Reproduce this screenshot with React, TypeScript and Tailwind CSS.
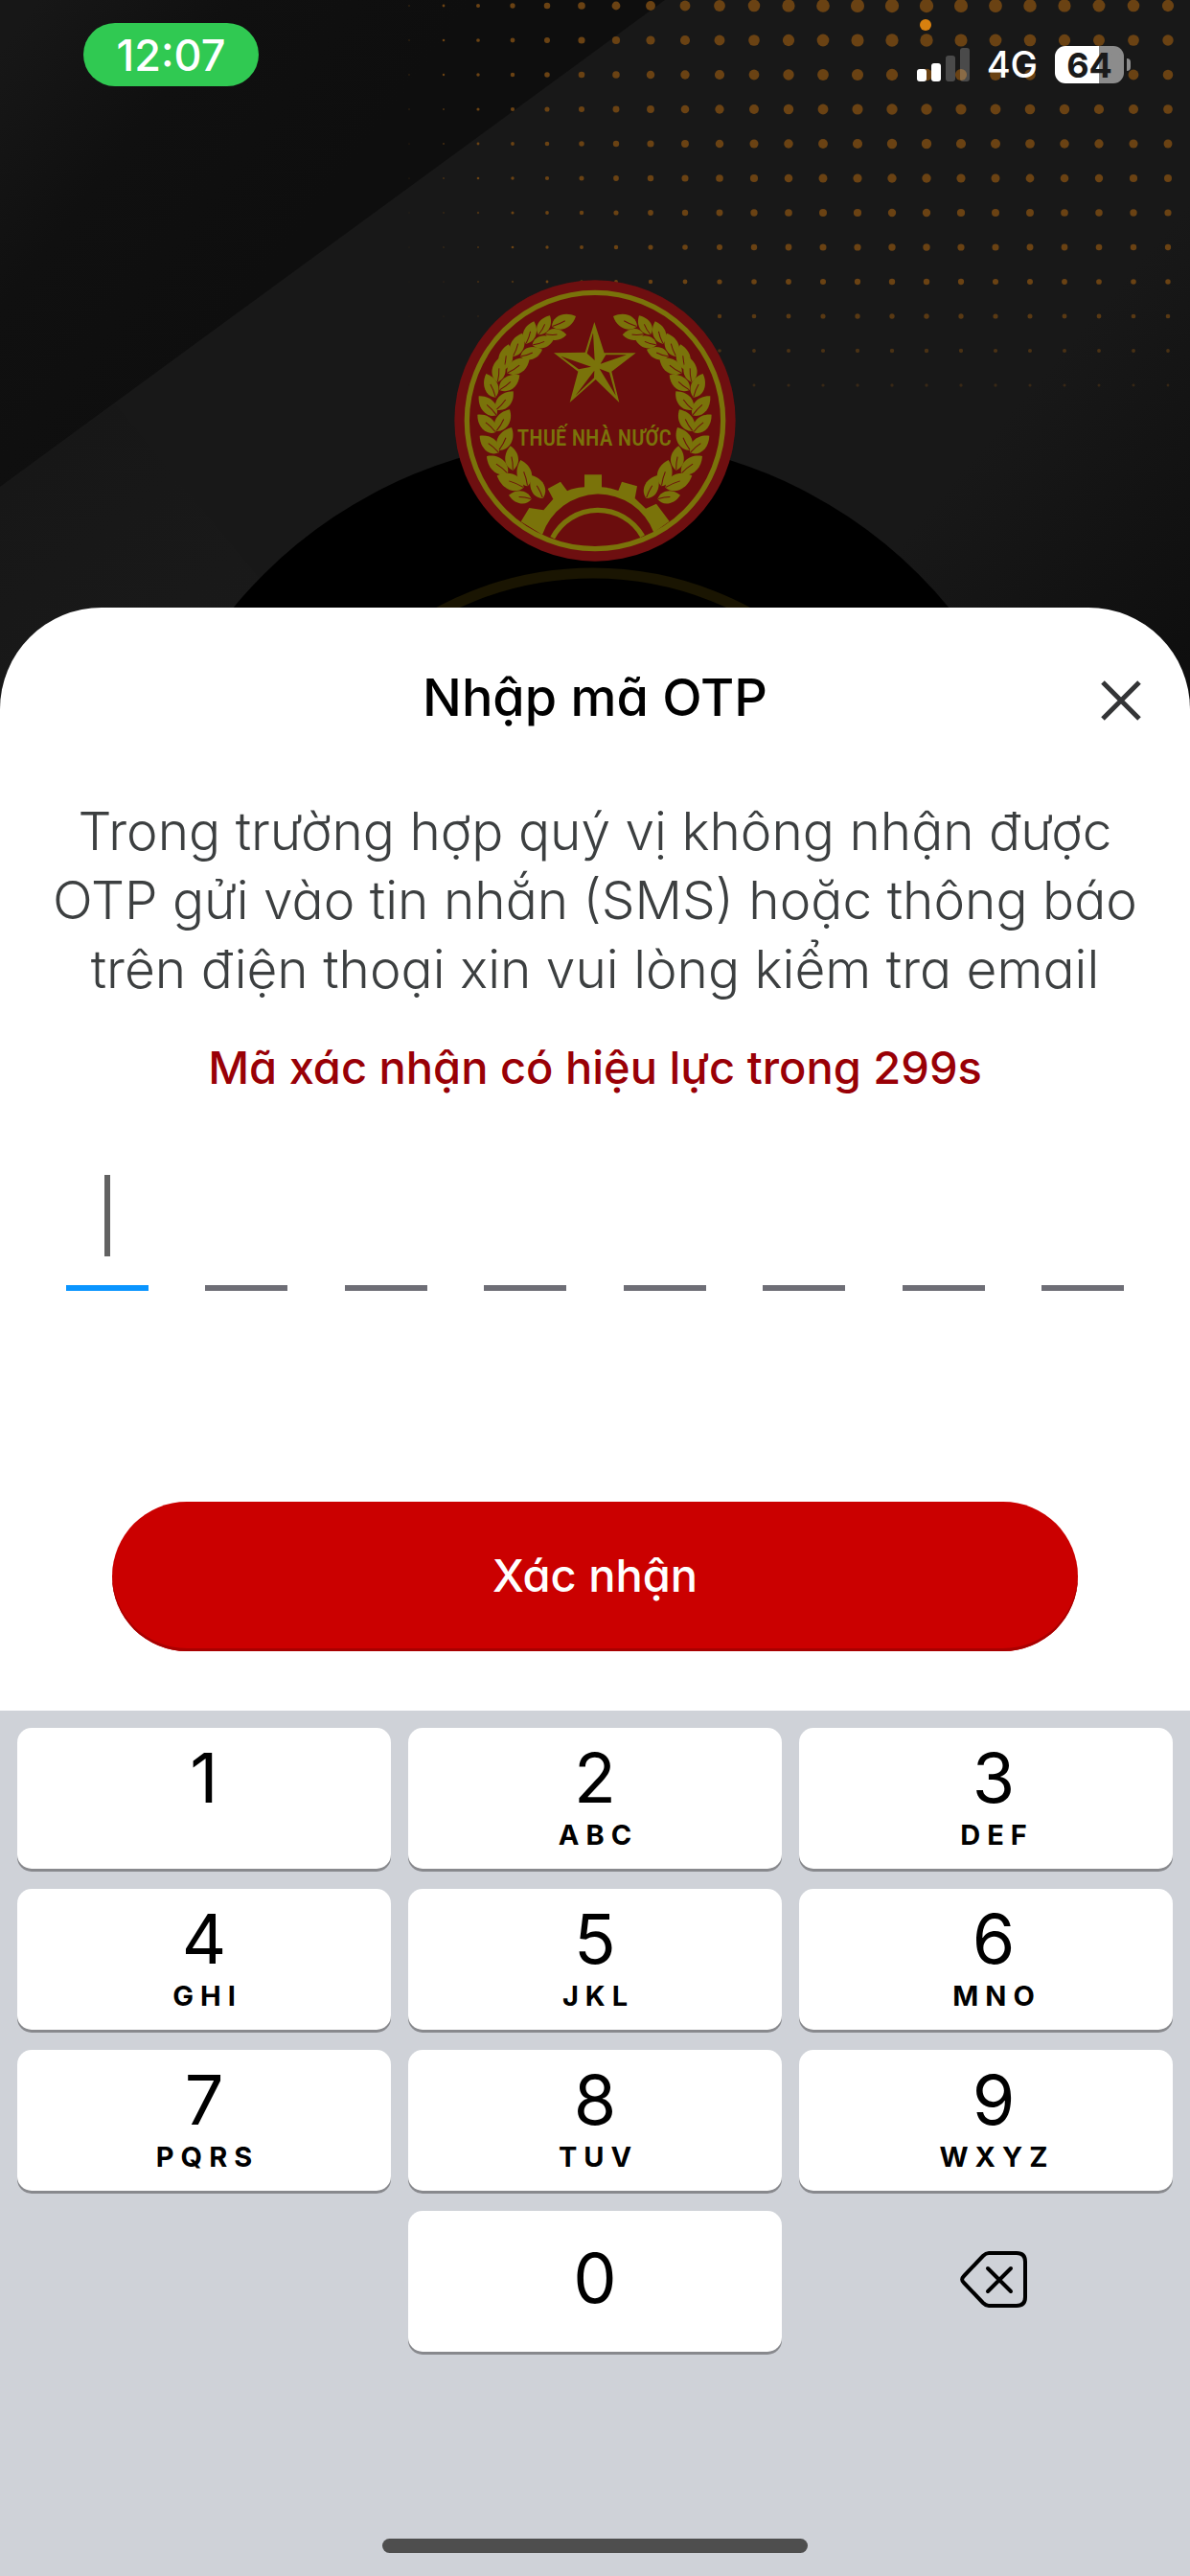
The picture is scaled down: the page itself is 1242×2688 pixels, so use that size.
const KEYS = [
  { digit: '1', letters: '' },
  { digit: '2', letters: 'ABC' },
  { digit: '3', letters: 'DEF' },
  { digit: '4', letters: 'GHI' },
  { digit: '5', letters: 'JKL' },
  { digit: '6', letters: 'MNO' },
  { digit: '7', letters: 'PQRS' },
  { digit: '8', letters: 'TUV' },
  { digit: '9', letters: 'WXYZ' },
];

// Dots of the halftone: they shrink down the page and away from column x = 968.
const DOTS = Array.from({ length: 12 }, (_, row) =>
  Array.from({ length: 23 }, (_, col) => {
    const x = 427 + col * 36;
    const y = 6 + row * 36;
    const away = x - 968;
    const side = away < 0 ? Math.pow(Math.cos(away / 385), 1.2) : 1 - (away / 272) * 0.16;
    const base = 7.2 - row * 0.5;
    const r = base * Math.max(0, side);
    const opacity = row < 9 ? 1 : 1 - (row - 8) * 0.2;
    return { x, y, r, opacity: r < 1.2 ? opacity * 0.6 : opacity };
  }),
).flat();

function Backdrop() {
  return (
    <svg
      aria-hidden="true"
      viewBox="0 0 1242 760"
      preserveAspectRatio="xMidYMin slice"
      className="absolute inset-x-0 top-0 h-auto w-full"
    >
      <defs>
        <linearGradient id="corner" gradientUnits="userSpaceOnUse" x1="40" y1="0" x2="330" y2="220">
          <stop offset="0" stopColor="#171717" />
          <stop offset="0.45" stopColor="#101010" />
          <stop offset="1" stopColor="#0e0e0e" />
        </linearGradient>
        <linearGradient id="ground" gradientUnits="userSpaceOnUse" x1="700" y1="300" x2="1242" y2="760">
          <stop offset="0" stopColor="#181818" />
          <stop offset="0.5" stopColor="#181818" />
          <stop offset="1" stopColor="#0d0d0d" />
        </linearGradient>
        <linearGradient id="lower" gradientUnits="userSpaceOnUse" x1="0" y1="480" x2="160" y2="680">
          <stop offset="0" stopColor="#151515" />
          <stop offset="1" stopColor="#1b1b1b" />
        </linearGradient>
      </defs>
      <rect width="1242" height="760" fill="url(#ground)" />
      <path d="M0 508 L120 421 L400 760 H0Z" fill="url(#lower)" opacity="0.4" />
      <path d="M0 0H694L0 508Z" fill="url(#corner)" />
      {DOTS.map((d) => (
        <circle key={`${d.x}-${d.y}`} cx={d.x} cy={d.y} r={d.r} fill="#6a4213" opacity={d.opacity} />
      ))}
      <circle cx="617" cy="942" r="484" fill="#000" />
      <circle cx="619" cy="937" r="339" fill="none" stroke="#1a1502" strokeWidth="11" />
    </svg>
  );
}

const LEAVES: [number, number, number, number][] = [
  [378, 212, 453, 180],
  [336, 238, 372, 178],
  [297, 266, 322, 196],
  [256, 306, 285, 233],
  [226, 348, 242, 268],
  [208, 386, 216, 308],
  [202, 434, 172, 360],
  [205, 490, 149, 430],
  [202, 543, 145, 488],
  [212, 607, 152, 554],
  [240, 672, 174, 618],
  [290, 716, 206, 679],
  [314, 752, 243, 740],
  [358, 236, 424, 238],
  [317, 270, 385, 250],
  [280, 306, 348, 284],
  [238, 358, 308, 313],
  [214, 411, 277, 364],
  [204, 473, 257, 415],
  [204, 540, 246, 472],
  [212, 600, 252, 528],
  [256, 662, 248, 586],
  [302, 712, 280, 630],
  [350, 750, 315, 678],
];

function Leaf({ x1, y1, x2, y2 }: { x1: number; y1: number; x2: number; y2: number }) {
  const length = Math.hypot(x2 - x1, y2 - y1);
  const angle = (Math.atan2(y2 - y1, x2 - x1) * 180) / Math.PI;
  return (
    <g transform={`translate(${x1} ${y1}) rotate(${angle})`}>
      <path
        d={`M0 0C${length * 0.15} ${-length * 0.34} ${length * 0.65} ${-length * 0.38} ${length} 0C${length * 0.7} ${length * 0.36} ${length * 0.2} ${length * 0.36} 0 0Z`}
        fill="#7a730a"
      />
      <path d={`M2 0Q${length * 0.3} 3 ${length * 0.55} 0`} fill="none" stroke="#6c0f0e" strokeWidth="3" />
    </g>
  );
}

function Wreath() {
  return (
    <>
      {LEAVES.map(([x1, y1, x2, y2]) => (
        <Leaf key={`${x1}-${y1}`} x1={x1} y1={y1} x2={x2} y2={y2} />
      ))}
    </>
  );
}

function Emblem() {
  return (
    <svg role="img" aria-label="Thuế Nhà Nước" viewBox="72 66 882 882" className="size-[294px]">
      <circle cx="513" cy="507" r="440" fill="#6e0f10" />
      <circle cx="513" cy="507" r="401" fill="#6b0d0d" stroke="#7a730a" strokeWidth="16" />
      <Wreath />
      <g transform="translate(1023 0) scale(-1 1)">
        <Wreath />
      </g>
      <path
        d="M511 198L542 295H641L565 353L589 450L515 378L434 450L460 353L384 295L482 293Z"
        fill="#7a730a"
      />
      <path
        d="M507 232L512 318L488 296ZM612 301L530 329L547 301ZM578 428L527 344L558 356ZM452 428L511 350L510 373ZM406 305L501 338L462 346Z"
        fill="#6b0d0d"
      />
      <text
        x="511"
        y="586"
        textAnchor="middle"
        fill="#7a730a"
        className="font-['Roboto_Condensed','Roboto',sans-serif] text-[70px] font-medium"
      >
        THUẾ NHÀ NƯỚC
      </text>
      <path
        d="M281 823L307 780L352 787L382 752L365 720L405 698L426 727Q450 716 480 715V676H534V715Q562 717 586 726L597 698L645 712L638 750L672 782L705 767L746 822L697 857A185 185 0 0 0 348 864Z"
        fill="#7a730a"
      />
      <path d="M380 874A160 160 0 0 1 662 869" fill="none" stroke="#7a730a" strokeWidth="16" />
    </svg>
  );
}

function SignalIcon() {
  return (
    <svg role="img" aria-label="Sóng di động" viewBox="0 0 55 35" className="h-[35px] w-[55px]" fill="#fff">
      <rect x="0" y="22" width="10" height="13" rx="3" />
      <rect x="15" y="16" width="10" height="19" rx="3" />
      <rect x="30" y="8" width="10" height="27" rx="3" opacity="0.22" />
      <rect x="45" y="0" width="10" height="35" rx="3" opacity="0.22" />
    </svg>
  );
}

function Battery() {
  return (
    <div className="flex items-center gap-[3px]">
      <div className="flex h-[39px] w-[72px] items-center justify-center rounded-[11px] bg-linear-to-r from-white from-64% to-[#8c8c8c] to-64% text-[36px] leading-none font-bold text-[#1a1a1a]">
        64
      </div>
      <div className="h-[13px] w-[4px] rounded-r-full bg-[#8c8c8c]" />
    </div>
  );
}

function StatusBar() {
  return (
    <div className="relative flex items-start justify-between pt-6 pr-[62px] pl-[87px] text-white">
      <time className="flex h-[66px] w-[183px] items-center justify-center rounded-full bg-[#30c952] text-[45px] leading-none font-medium">
        12:07
      </time>
      <span className="absolute top-5 right-[270px] size-3 rounded-full bg-[#d8800f]" />
      <div className="flex items-center gap-[18px] pt-[24px]">
        <SignalIcon />
        <span className="text-[38px] leading-[39px] font-medium">4G</span>
        <Battery />
      </div>
    </div>
  );
}

function CodeInputs() {
  return (
    <div role="group" aria-label="Mã OTP" className="mx-[69px] mt-[77px] flex justify-between">
      {Array.from({ length: 8 }, (_, i) => (
        <div key={i} className="relative">
          <input
            type="text"
            inputMode="numeric"
            maxLength={1}
            aria-label={`Chữ số ${i + 1}`}
            className={
              i === 0
                ? 'block h-32 w-[86px] border-b-6 border-[#0a95ff] bg-transparent text-center text-[56px] outline-none'
                : 'block h-32 w-[86px] border-b-6 border-[#6e6e76] bg-transparent text-center text-[56px] outline-none'
            }
          />
          {i === 0 && <span className="absolute top-[7px] left-10 h-[85px] w-[6px] bg-[#626262]" />}
        </div>
      ))}
    </div>
  );
}

function Keypad() {
  return (
    <section aria-label="Bàn phím số" className="flex flex-1 flex-col justify-between bg-[#cfd2d8] px-[18px] pt-[18px] pb-6 text-black">
      <div className="grid grid-cols-3 gap-x-[18px] gap-y-[21px]">
        {KEYS.map((key) => (
          <button
            key={key.digit}
            type="button"
            className="flex h-[147px] flex-col items-center rounded-[15px] bg-white pt-4 shadow-[0_3px_0_#88898d] nth-[3n]:pl-4"
          >
            <span className="text-[72px] leading-none">{key.digit}</span>
            <span className="mt-[9px] pl-[7px] text-[29px] leading-none font-bold tracking-[7px]">{key.letters}</span>
          </button>
        ))}
        <button
          type="button"
          className="col-start-2 h-[147px] rounded-[15px] bg-white pb-2 text-[72px] leading-none shadow-[0_3px_0_#88898d]"
        >
          0
        </button>
        <button type="button" aria-label="Xóa" className="flex h-[147px] items-center justify-center pb-1 pl-4">
          <svg
            viewBox="0 0 70 59"
            className="h-[59px] w-[70px]"
            fill="none"
            stroke="currentColor"
            strokeWidth="4"
            strokeLinecap="round"
            strokeLinejoin="round"
          >
            <path d="M30 2H59C65 2 68 5 68 11V48C68 54 65 57 59 57H30C27.500 57 26 56 24 54L4 33C1.500 30.500 1.500 28.500 4 26L24 5C26 3 27.500 2 30 2Z" />
            <path d="M29 18L53 42M53 18L29 42" />
          </svg>
        </button>
      </div>
      <div className="mx-auto h-[15px] w-[444px] rounded-full bg-[#4e4e4e]" />
    </section>
  );
}

export default function App() {
  return (
    <main className="relative flex min-h-screen flex-col bg-[#0e0e0e] font-['Inter',sans-serif]">
      <Backdrop />
      <header className="relative">
        <StatusBar />
        <div className="mt-[202px] flex justify-center">
          <Emblem />
        </div>
      </header>
      <section
        aria-labelledby="otp-title"
        className="relative mt-12 rounded-t-[106px] bg-white pt-[66px] pb-[62px] text-center [font-feature-settings:'cv11']"
      >
        <h1 id="otp-title" className="text-[54px] leading-[56px] font-medium text-black">
          Nhập mã OTP
        </h1>
        <button type="button" aria-label="Đóng" className="absolute top-[76px] right-[51px] text-[#333436]">
          <svg viewBox="0 0 42 42" className="size-[42px]" fill="none" stroke="currentColor" strokeWidth="5">
            <path d="M2 2L40 40M40 2L2 40" />
          </svg>
        </button>
        <p className="mt-[75px] px-12 text-[55px] leading-[72px] font-light text-[#3c3f40]">
          Trong trường hợp quý vị không nhận được OTP gửi vào tin nhắn (SMS) hoặc thông báo trên điện thoại xin vui
          lòng kiểm tra email
        </p>
        <p className="mt-[39px] text-[47px] leading-[56px] font-medium text-[#990006]">Mã xác nhận có hiệu lực trong 299s</p>
        <CodeInputs />
        <div className="mt-[220px] px-[117px]">
          <button
            type="button"
            className="h-[156px] w-full rounded-full bg-[#cb0000] pb-1 text-[47px] leading-none font-medium text-white shadow-[inset_0_-3px_0_#a80000]"
          >
            Xác nhận
          </button>
        </div>
      </section>
      <Keypad />
    </main>
  );
}
